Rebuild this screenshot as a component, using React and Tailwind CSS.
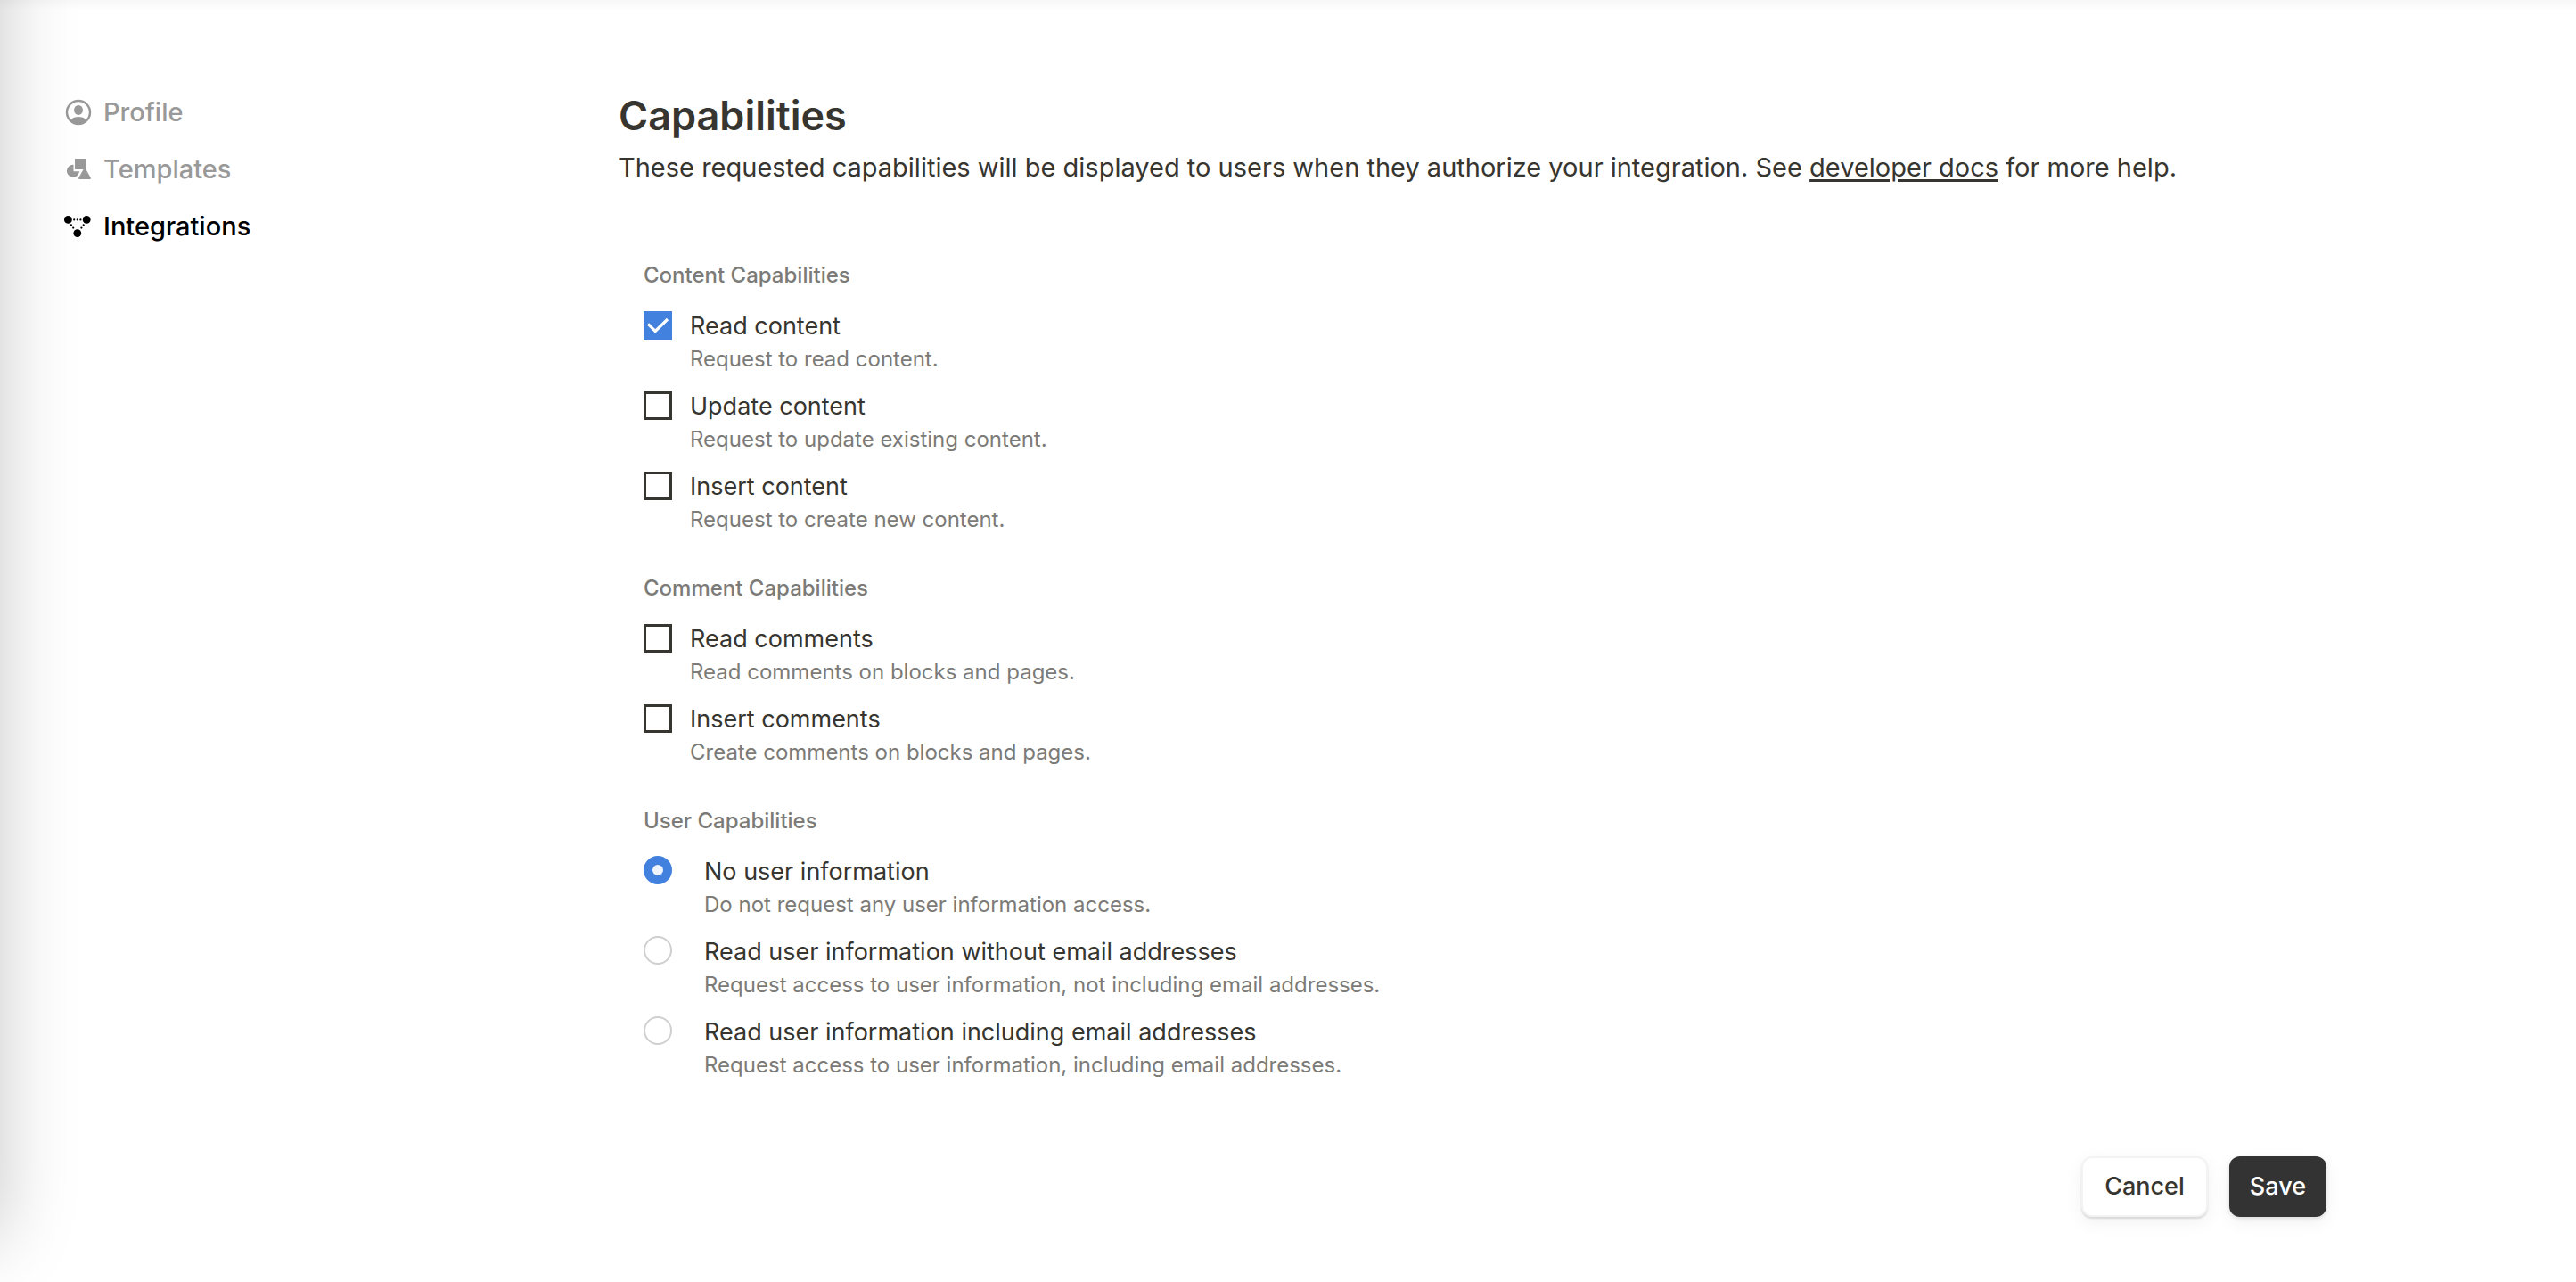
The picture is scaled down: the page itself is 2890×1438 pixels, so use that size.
import { useState } from "react";

function ProfileIcon() {
  return (
    <svg viewBox="0 0 32 32" className="size-8 shrink-0" aria-hidden="true">
      <clipPath id="profile-ring">
        <circle cx="16" cy="16" r="13.5" />
      </clipPath>
      <circle cx="16" cy="16" r="13" fill="none" stroke="currentColor" strokeWidth="2.5" />
      <ellipse cx="16" cy="13.4" rx="4.9" ry="5.5" fill="currentColor" />
      <ellipse cx="16" cy="27.6" rx="10.4" ry="6.6" fill="currentColor" clipPath="url(#profile-ring)" />
    </svg>
  );
}

function TemplatesIcon() {
  return (
    <svg viewBox="0 0 32 32" className="size-8 shrink-0" fill="currentColor" aria-hidden="true">
      <path d="M10.5 10.8V18.2H17.4L15.4 22.2A7 7 0 1 1 10.5 10.8Z" />
      <rect x="12" y="4" width="12" height="12" />
      <path d="M22 15.2Q23 13.6 24 15.2L29.8 25.6Q30.4 27 29 27H17Q15.6 27 16.2 25.6Z" />
    </svg>
  );
}

function IntegrationsIcon() {
  return (
    <svg viewBox="0 0 32 32" className="size-8 shrink-0" fill="currentColor" aria-hidden="true">
      <circle cx="4.4" cy="8.4" r="4.4" />
      <circle cx="25.2" cy="8.4" r="4.4" />
      <circle cx="14.8" cy="23.6" r="4.4" />
      <circle cx="11.2" cy="8.4" r="1.1" />
      <circle cx="14.8" cy="8.4" r="1.1" />
      <circle cx="18.4" cy="8.4" r="1.1" />
      <circle cx="7.9" cy="14.4" r="1.1" />
      <circle cx="10.2" cy="17.6" r="1.1" />
      <circle cx="21.7" cy="14.4" r="1.1" />
      <circle cx="19.4" cy="17.6" r="1.1" />
    </svg>
  );
}

const NAV = [
  { label: "Profile", Icon: ProfileIcon },
  { label: "Templates", Icon: TemplatesIcon },
  { label: "Integrations", Icon: IntegrationsIcon, active: true },
];

const CONTENT = [
  { id: "read-content", label: "Read content", hint: "Request to read content.", on: true },
  { id: "update-content", label: "Update content", hint: "Request to update existing content." },
  { id: "insert-content", label: "Insert content", hint: "Request to create new content." },
];

const COMMENT = [
  { id: "read-comments", label: "Read comments", hint: "Read comments on blocks and pages." },
  { id: "insert-comments", label: "Insert comments", hint: "Create comments on blocks and pages." },
];

const USER = [
  { id: "user-none", label: "No user information", hint: "Do not request any user information access." },
  {
    id: "user-no-email",
    label: "Read user information without email addresses",
    hint: "Request access to user information, not including email addresses.",
  },
  {
    id: "user-email",
    label: "Read user information including email addresses",
    hint: "Request access to user information, including email addresses.",
  },
];

function Section({ title, children }) {
  return (
    <fieldset>
      <legend className="mb-5 text-[24px] leading-9 font-medium text-[#7c7b77]">{title}</legend>
      <div className="flex flex-col gap-4">{children}</div>
    </fieldset>
  );
}

function OptionText({ id, label, hint }) {
  return (
    <div>
      <label htmlFor={id} className="block text-[27px] leading-[38px] text-[#37352f]">
        {label}
      </label>
      <p id={`${id}-hint`} className="text-[24px] leading-9 text-[#7c7b77]">
        {hint}
      </p>
    </div>
  );
}

function CheckOption({ id, label, hint, on = false }) {
  return (
    <div className="flex items-start gap-5">
      <span className="mt-0.5 grid size-8 shrink-0">
        <input
          id={id}
          type="checkbox"
          defaultChecked={on}
          aria-describedby={`${id}-hint`}
          className="peer col-start-1 row-start-1 size-8 appearance-none border-3 border-[#37352f] checked:border-0 checked:bg-[#4281dd]"
        />
        <svg
          viewBox="0 0 32 32"
          className="pointer-events-none invisible col-start-1 row-start-1 size-8 peer-checked:visible"
          fill="none"
          stroke="white"
          strokeWidth="3.2"
          aria-hidden="true"
        >
          <path d="M5 14.4L13.2 22.4L27 9" />
        </svg>
      </span>
      <OptionText id={id} label={label} hint={hint} />
    </div>
  );
}

function RadioOption({ id, label, hint, checked, onSelect }) {
  return (
    <div className="flex items-start gap-9">
      <input
        id={id}
        type="radio"
        name="user-capability"
        checked={checked}
        onChange={onSelect}
        aria-describedby={`${id}-hint`}
        className="mt-px size-8 shrink-0 appearance-none rounded-full border-2 border-[#cfcfcf] checked:border-10 checked:border-[#4281dd] checked:bg-[#eff4fc]"
      />
      <OptionText id={id} label={label} hint={hint} />
    </div>
  );
}

export default function App() {
  const [user, setUser] = useState("user-none");
  return (
    <div className="relative flex min-h-screen overflow-hidden bg-white font-['Inter',sans-serif]">
      <div className="pointer-events-none absolute top-[-200px] right-full bottom-12 w-96 shadow-[0_0_80px_rgba(0,0,0,0.22)]" />
      <div className="pointer-events-none absolute inset-x-0 top-0 h-3 bg-linear-to-b from-black/3 to-transparent" />

      <nav className="w-[694px] shrink-0 pt-[106px] pl-[72px]">
        <ul className="flex flex-col gap-6">
          {NAV.map(({ label, Icon, active }) => (
            <li key={label}>
              <a
                href="#"
                aria-current={active ? "page" : undefined}
                className={`flex items-center gap-3 text-[29px] leading-10 font-medium ${active ? "text-black" : "text-[#999999]"}`}
              >
                <Icon />
                {label}
              </a>
            </li>
          ))}
        </ul>
      </nav>

      <main className="mr-[280px] flex-1 pt-[104px] text-[#37352f]">
        <h1 className="text-[45px] leading-[52px] font-semibold">Capabilities</h1>
        <p className="mt-3 text-[29px] leading-10">
          These requested capabilities will be displayed to users when they authorize your integration. See{" "}
          <a href="#" className="underline decoration-[3px] underline-offset-[3px]">
            developer docs
          </a>{" "}
          for more help.
        </p>

        <form onSubmit={(e) => e.preventDefault()}>
          <div className="flex flex-col gap-[41px] pt-[83px] pl-7">
            <Section title="Content Capabilities">
              {CONTENT.map((o) => (
                <CheckOption key={o.id} {...o} />
              ))}
            </Section>
            <Section title="Comment Capabilities">
              {COMMENT.map((o) => (
                <CheckOption key={o.id} {...o} />
              ))}
            </Section>
            <Section title="User Capabilities">
              {USER.map((o) => (
                <RadioOption key={o.id} {...o} checked={user === o.id} onSelect={() => setUser(o.id)} />
              ))}
            </Section>
          </div>

          <div className="mt-[84px] flex justify-end gap-6">
            <button
              type="button"
              className="h-[68px] rounded-xl border-2 border-[#f3f3f3] bg-white px-6 text-[27px] leading-9 font-medium shadow-[0_2px_2px_rgba(0,0,0,0.12),0_6px_20px_rgba(0,0,0,0.06)]"
            >
              Cancel
            </button>
            <button
              type="submit"
              className="h-[68px] rounded-xl bg-[#333333] px-[23px] text-[27px] leading-9 font-medium text-white shadow-[0_2px_4px_rgba(0,0,0,0.1),0_6px_20px_rgba(0,0,0,0.06)]"
            >
              Save
            </button>
          </div>
        </form>
      </main>
    </div>
  );
}
